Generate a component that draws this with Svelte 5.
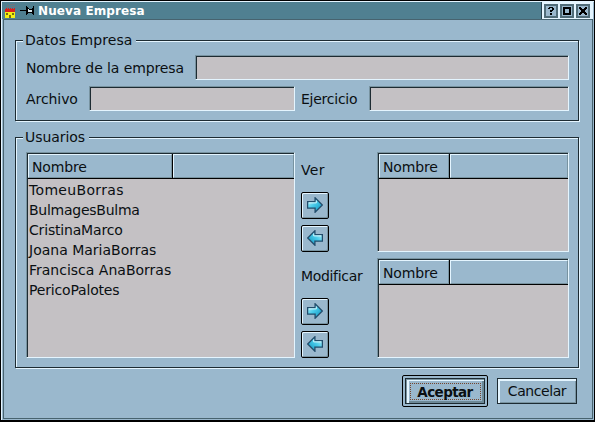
<script>
  const users = ['TomeuBorras', 'BulmagesBulma', 'CristinaMarco', 'Joana MariaBorras', 'Francisca AnaBorras', 'PericoPalotes'];
</script>

{#snippet arrow(left)}
  <button class="tool" aria-label={left ? 'Quitar' : 'Agregar'}>
    <svg class:flip={left} width="16" height="16" viewBox="0 0 16 16">
      <defs>
        <linearGradient id="cyan" x1="0" y1="0" x2="1" y2="1">
          <stop offset="0" stop-color="#d5fbff" />
          <stop offset=".45" stop-color="#48cbea" />
          <stop offset="1" stop-color="#078bb8" />
        </linearGradient>
      </defs>
      <path d="M.6 4.6H8.1V.8L15.3 8L8.1 15.2V11.2H.6Z" fill="url(#cyan)" stroke="#234c6b" stroke-width="1.3" />
      <path d="M1.8 5.9H9.3V3.5" fill="none" stroke="#e0fbff" stroke-width=".9" />
    </svg>
  </button>
{/snippet}

{#snippet heading(cls)}
  <div class="head"><div class="cell {cls}"><span>Nombre</span></div><div class="cell rest"></div></div>
{/snippet}

<div class="window">
  <header>
    <div class="title">
      <svg class="house" width="11" height="15" viewBox="0 0 11 15" shape-rendering="crispEdges">
        <path d="M2 1.5h2M5 .5h5M1 3.5h2M6 2.5h4" stroke="#71747b" />
        <path d="M1 4h1v1h1V4h1v1h1V4h1v1h1V4h1v1h1V4h1v4H0V5h1z" fill="#d8201c" />
        <path d="M0 8h10v6H0z" fill="#f4ed13" />
        <path d="M1 9h2v2H1zM7 9h2v2H7zM4 11h2v3H4z" fill="#77700e" />
      </svg>
      <svg class="pin" width="15" height="10" viewBox="0 0 15 10" shape-rendering="crispEdges">
        <path d="M0 4h6v1H0zM6 0h1v9H6zM7 1h1v7H7zM8 2h1v1H8zM9 3h3v1H9zM8 6h4v1H8zM12 2h1v6h-1zM13 0h1v9h-1z" />
        <path d="M8 3h1v3H8zM9 4h3v2H9z" fill="#d8e8ee" />
      </svg>
      <span>Nueva Empresa</span>
    </div>
    <div class="controls">
      <i><svg width="10" height="10" viewBox="0 0 10 10" shape-rendering="crispEdges"><path d="M3 1h4v1h1v2H7v1H6v1H4V4h2V2H4v1H2V2h1zM4 7h2v2H4z" /></svg></i>
      <i><svg width="10" height="10" viewBox="0 0 10 10" shape-rendering="crispEdges"><path fill-rule="evenodd" d="M1 1h8v8H1zM3 3v4h4V3z" /></svg></i>
      <i><svg width="10" height="10" viewBox="0 0 10 10" shape-rendering="crispEdges"><path d="M1 1h2v1h1v1h2V2h1V1h2v2H8v1H7v2h1v1h1v2H7V8H6V7H4v1H3v1H1V7h1V6h1V4H2V3H1z" /></svg></i>
    </div>
  </header>
  <main>
    <section class="group company">
      <h2><span class="t1">Datos Empresa</span></h2>
      <div class="row">
        <label for="nombre" class="t2">Nombre de la empresa</label>
        <input id="nombre" class="wide" />
      </div>
      <div class="row second">
        <label for="archivo" class="t3">Archivo</label>
        <input id="archivo" class="file" />
        <label for="ejercicio" class="t4">Ejercicio</label>
        <input id="ejercicio" class="year" />
      </div>
    </section>
    <section class="group users">
      <h2><span class="t5">Usuarios</span></h2>
      <div class="columns">
        <div class="list big">
          {@render heading('c145')}
          <ul>
            {#each users as user, i}<li class="u{i}">{user}</li>{/each}
          </ul>
        </div>
        <div class="side">
          <div class="actions"><span class="t6">Ver</span>{@render arrow(false)}{@render arrow(true)}</div>
          <div class="actions"><span class="t7">Modificar</span>{@render arrow(false)}{@render arrow(true)}</div>
        </div>
        <div class="targets">
          <div class="list">{@render heading('c71')}</div>
          <div class="list">{@render heading('c71')}</div>
        </div>
      </div>
    </section>
    <footer>
      <div class="default"><button class="push"><b>Aceptar</b></button></div>
      <button class="push"><span class="t8">Cancelar</span></button>
    </footer>
  </main>
</div>

<style>
  :global(body) { background: #000; }
  * { box-sizing: border-box; }
  .window {
    width: 595px; height: 422px; background: #9ab8cd; overflow: hidden;
    border: 1px solid #000; border-bottom-width: 2px;
    font: 14px/20px "DejaVu Sans", sans-serif; color: #0a0f12;
    display: flex; flex-direction: column;
    box-shadow: inset 1px 1px 0 #e4f5ff;
    padding: 1px;
  }
  header { display: flex; height: 17px; flex: none; }
  .title { width: 540px; background: #508091; display: flex; border-right: 1px solid #27414d; }
  .title span { color: #fff; font: bold 12px/19px "DejaVu Sans", sans-serif; letter-spacing: .1px; margin-left: 3px; white-space: nowrap; }
  .house { margin: 2px 0 0 3px; }
  .pin { margin: 4px 0 0 4px; }
  .controls { display: flex; flex: 1; gap: 2px; padding: 2px 0 0 2px; background: #e4f5ff; }
  .controls i { width: 14px; height: 14px; border: 2px solid #506c78; background: #9ab8cd; }
  .controls svg { display: block; }
  main {
    flex: 1; margin: 0 0 0 1px; border: 1px solid #47636f;
    padding: 20px 11px 0 11px; display: flex; flex-direction: column;
  }
  .group {
    width: 564px; border: 1px solid #1d2b32; flex: none;
    box-shadow: 1px 1px #e4f5ff, inset 1px 1px #e4f5ff;
  }
  .company { height: 81px; }
  .users { height: 231px; margin-top: 16px; }
  h2 { margin: -11px 0 0 7px; height: 20px; font: inherit; display: flex; }
  h2 span { background: #9ab8cd; padding: 0 0 0 2px; height: 20px; white-space: nowrap; }
  .t1 { width: 113px; letter-spacing: .08px; }
  .t5 { width: 66px; letter-spacing: -.05px; }
  .row { display: flex; align-items: center; padding-left: 10px; margin-top: 5px; height: 25px; }
  .second { margin-top: 6px; }
  .row label, .actions span { white-space: nowrap; flex: none; }
  .t2 { width: 169px; letter-spacing: -.1px; }
  .t3 { width: 63px; letter-spacing: -.07px; }
  .t4 { width: 68px; letter-spacing: -.25px; }
  .second input.file { margin-right: 6px; }
  input, .list {
    background: #c4c1c4; border: 1px solid; border-color: #7893a0 #e4f5ff #e4f5ff #7893a0;
    box-shadow: inset 1px 1px #1d2b32; border-radius: 0; outline: 0; margin: 0;
  }
  input { height: 25px; padding: 0 3px; flex: none; }
  .wide { width: 374px; } .file { width: 206px; } .year { width: 200px; }
  .columns { display: flex; padding: 5px 0 0 10px; }
  .list { width: 192px; height: 100px; padding: 1px 0 0 1px; flex: none; }
  .big { width: 269px; height: 206px; }
  .head { display: flex; height: 25px; background: #9ab8cd; border-bottom: 1px solid #000; }
  .cell { border: 1px solid; border-color: #e4f5ff #7893a0 #7893a0 #e4f5ff; line-height: 25px; padding-left: 3px; letter-spacing: -.15px; }
  .c145 { width: 144px; } .c71 { width: 70px; }
  .rest { flex: 1; box-shadow: -1px 0 #000; margin-left: 1px; }
  ul { list-style: none; margin: 1px 0 0; padding: 0 0 0 1px; }
  li { height: 20px; line-height: 21px; white-space: nowrap; }
  .u0 { letter-spacing: .33px; } .u1 { letter-spacing: -.26px; } .u2 { letter-spacing: -.18px; } .u5 { letter-spacing: -.18px; }
  .side { width: 82px; padding-left: 6px; }
  .actions { height: 106px; display: flex; flex-direction: column; }
  .actions span { height: 40px; line-height: 36px; }
  .t6 { letter-spacing: .3px; }
  .t7 { letter-spacing: -.33px; }
  .tool {
    width: 28px; height: 27px; padding: 0; margin: 0 0 6px; flex: none;
    display: flex; align-items: center; justify-content: center;
    background: #9ab8cd; border: 1px solid #000; border-radius: 2px;
    box-shadow: inset 1px 1px #e4f5ff, inset -1px -1px #7893a0;
  }
  .tool svg { margin-top: -1px; }
  .flip { transform: scaleX(-1); }
  .targets { display: flex; flex-direction: column; gap: 6px; }
  footer { display: flex; margin: 7px 4px 0 0; justify-content: flex-end; gap: 9px; align-items: center; height: 32px; }
  .default { width: 86px; height: 32px; border: 1px solid #000; border-radius: 2px; padding: 2px; }
  .push {
    width: 80px; height: 26px; padding: 0; border: 1px solid #1d2b32; border-radius: 0; font: inherit; color: inherit;
    background: #9ab8cd; box-shadow: inset 2px 2px #e4f5ff, inset -1px -1px #7893a0;
    display: flex; align-items: center; justify-content: center;
  }
  .default .push { box-shadow: inset 1px 1px #7893a0, inset 3px 2px #e4f5ff, inset -2px -2px #6d8997; }
  .t8 { letter-spacing: -.42px; }
  b { width: 71px; height: 17px; border: 1px dotted #75462f; font-size: 13.5px; letter-spacing: -.6px; line-height: 16px; }
</style>
